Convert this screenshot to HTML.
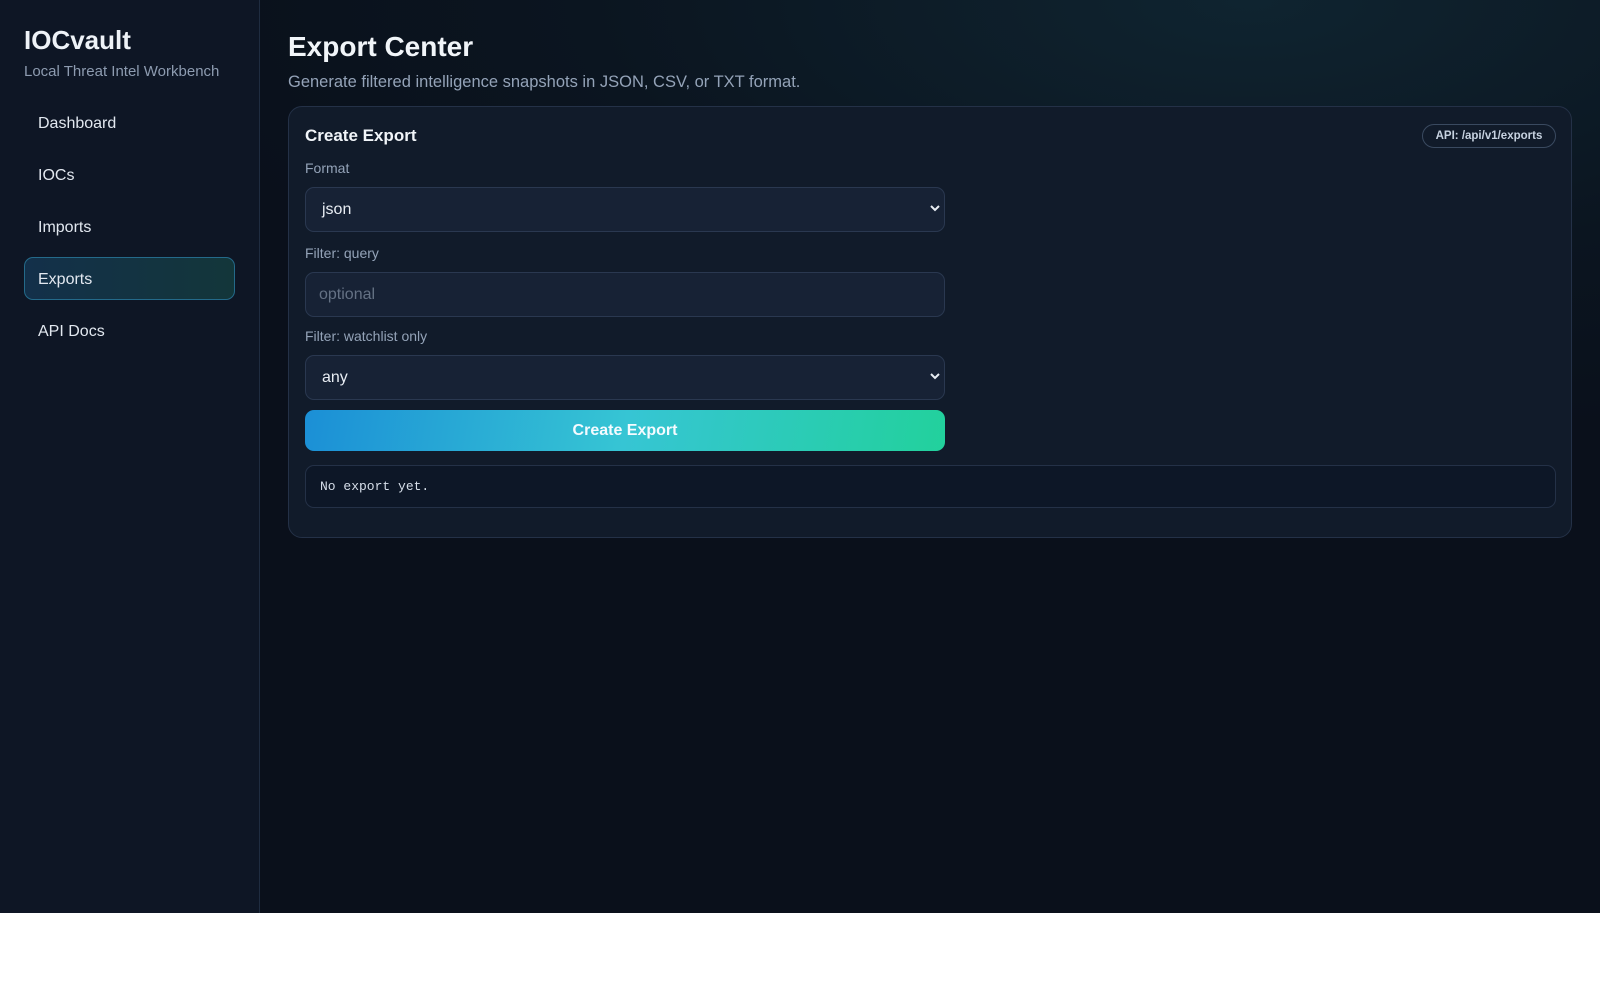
<!DOCTYPE html>
<html><head><meta charset="utf-8"><style>
*{box-sizing:border-box;margin:0;padding:0}
html,body{width:1600px;height:1000px;background:#fff;font-family:"Liberation Sans",sans-serif;overflow:hidden}
.app{position:absolute;left:0;top:0;width:1600px;height:913px;background:radial-gradient(ellipse 1100px 450px at 1250px 0px,#0f2430 0%,#0b1520 60%,#0a101b 100%);}
.side{position:absolute;left:0;top:0;width:260px;height:913px;background:#0e1625;border-right:1px solid #1f2c40}
.logo{position:absolute;left:24px;top:25px;font-size:26px;font-weight:bold;color:#eef2f7}
.sub{position:absolute;left:24px;top:63px;font-size:15px;color:#8d9bb0}
.nav{position:absolute;left:24px;width:211px;height:43px;padding-left:13px;line-height:43px;font-size:16px;color:#e2e8f0;border-radius:9px;border:1px solid transparent}
.nav.act{background:linear-gradient(90deg,#13304a,#13363a);border-color:#246a8a}
h1{position:absolute;left:288px;top:31px;font-size:28px;color:#f1f5f9}
.desc{position:absolute;left:288px;top:73px;font-size:16.5px;color:#94a3b8}
.card{position:absolute;left:288px;top:106px;width:1284px;height:432px;background:#111b2a;border:1px solid #243147;border-radius:14px}
.ct{position:absolute;left:16px;top:19px;font-size:17px;font-weight:bold;color:#f1f5f9}
.badge{position:absolute;left:1133px;top:17px;width:134px;height:24px;border:1px solid #3a4a60;border-radius:12px;font-size:11.5px;font-weight:bold;color:#c7d2e0;text-align:center;line-height:22px}
.lbl{position:absolute;left:16px;font-size:14px;color:#94a3b8}
.fld{position:absolute;left:16px;width:640px;height:45px;background:#172235;border:1px solid #2a3850;border-radius:9px;font-size:16px;color:#e8edf3;padding-left:16px;line-height:43px}
.fld.ph{color:#647184;padding-left:13px}
.chev{position:absolute;right:4px;top:15px;width:10px;height:10px}
.btn{position:absolute;left:16px;top:303px;width:640px;height:41px;border-radius:9px;background:linear-gradient(100deg,#1b8fd6 0%,#36c5d4 50%,#22d19c 100%);color:#f5fbff;font-weight:bold;font-size:16px;text-align:center;line-height:41px}
.out{position:absolute;left:16px;top:358px;width:1251px;height:43px;background:#0d1727;border:1px solid #243147;border-radius:9px;font-family:"Liberation Mono",monospace;font-size:13px;color:#d6dee9;padding-left:14px;line-height:41px}
</style></head><body>
<div class="app">
<div class="side">
<div class="logo">IOCvault</div>
<div class="sub">Local Threat Intel Workbench</div>
<div class="nav" style="top:101px">Dashboard</div>
<div class="nav" style="top:153px">IOCs</div>
<div class="nav" style="top:205px">Imports</div>
<div class="nav act" style="top:257px">Exports</div>
<div class="nav" style="top:309px">API Docs</div>
</div>
<h1>Export Center</h1>
<div class="desc">Generate filtered intelligence snapshots in JSON, CSV, or TXT format.</div>
<div class="card">
<div class="ct">Create Export</div>
<div class="badge">API: /api/v1/exports</div>
<div class="lbl" style="top:53px">Format</div>
<div class="fld" style="top:80px">json<svg class="chev" viewBox="0 0 10 10"><path d="M1 3 L5 7 L9 3" stroke="#e8edf3" stroke-width="2" fill="none"/></svg></div>
<div class="lbl" style="top:138px">Filter: query</div>
<div class="fld ph" style="top:165px">optional</div>
<div class="lbl" style="top:221px">Filter: watchlist only</div>
<div class="fld" style="top:248px">any<svg class="chev" viewBox="0 0 10 10"><path d="M1 3 L5 7 L9 3" stroke="#e8edf3" stroke-width="2" fill="none"/></svg></div>
<div class="btn">Create Export</div>
<div class="out">No export yet.</div>
</div>
</div>
</body></html>
